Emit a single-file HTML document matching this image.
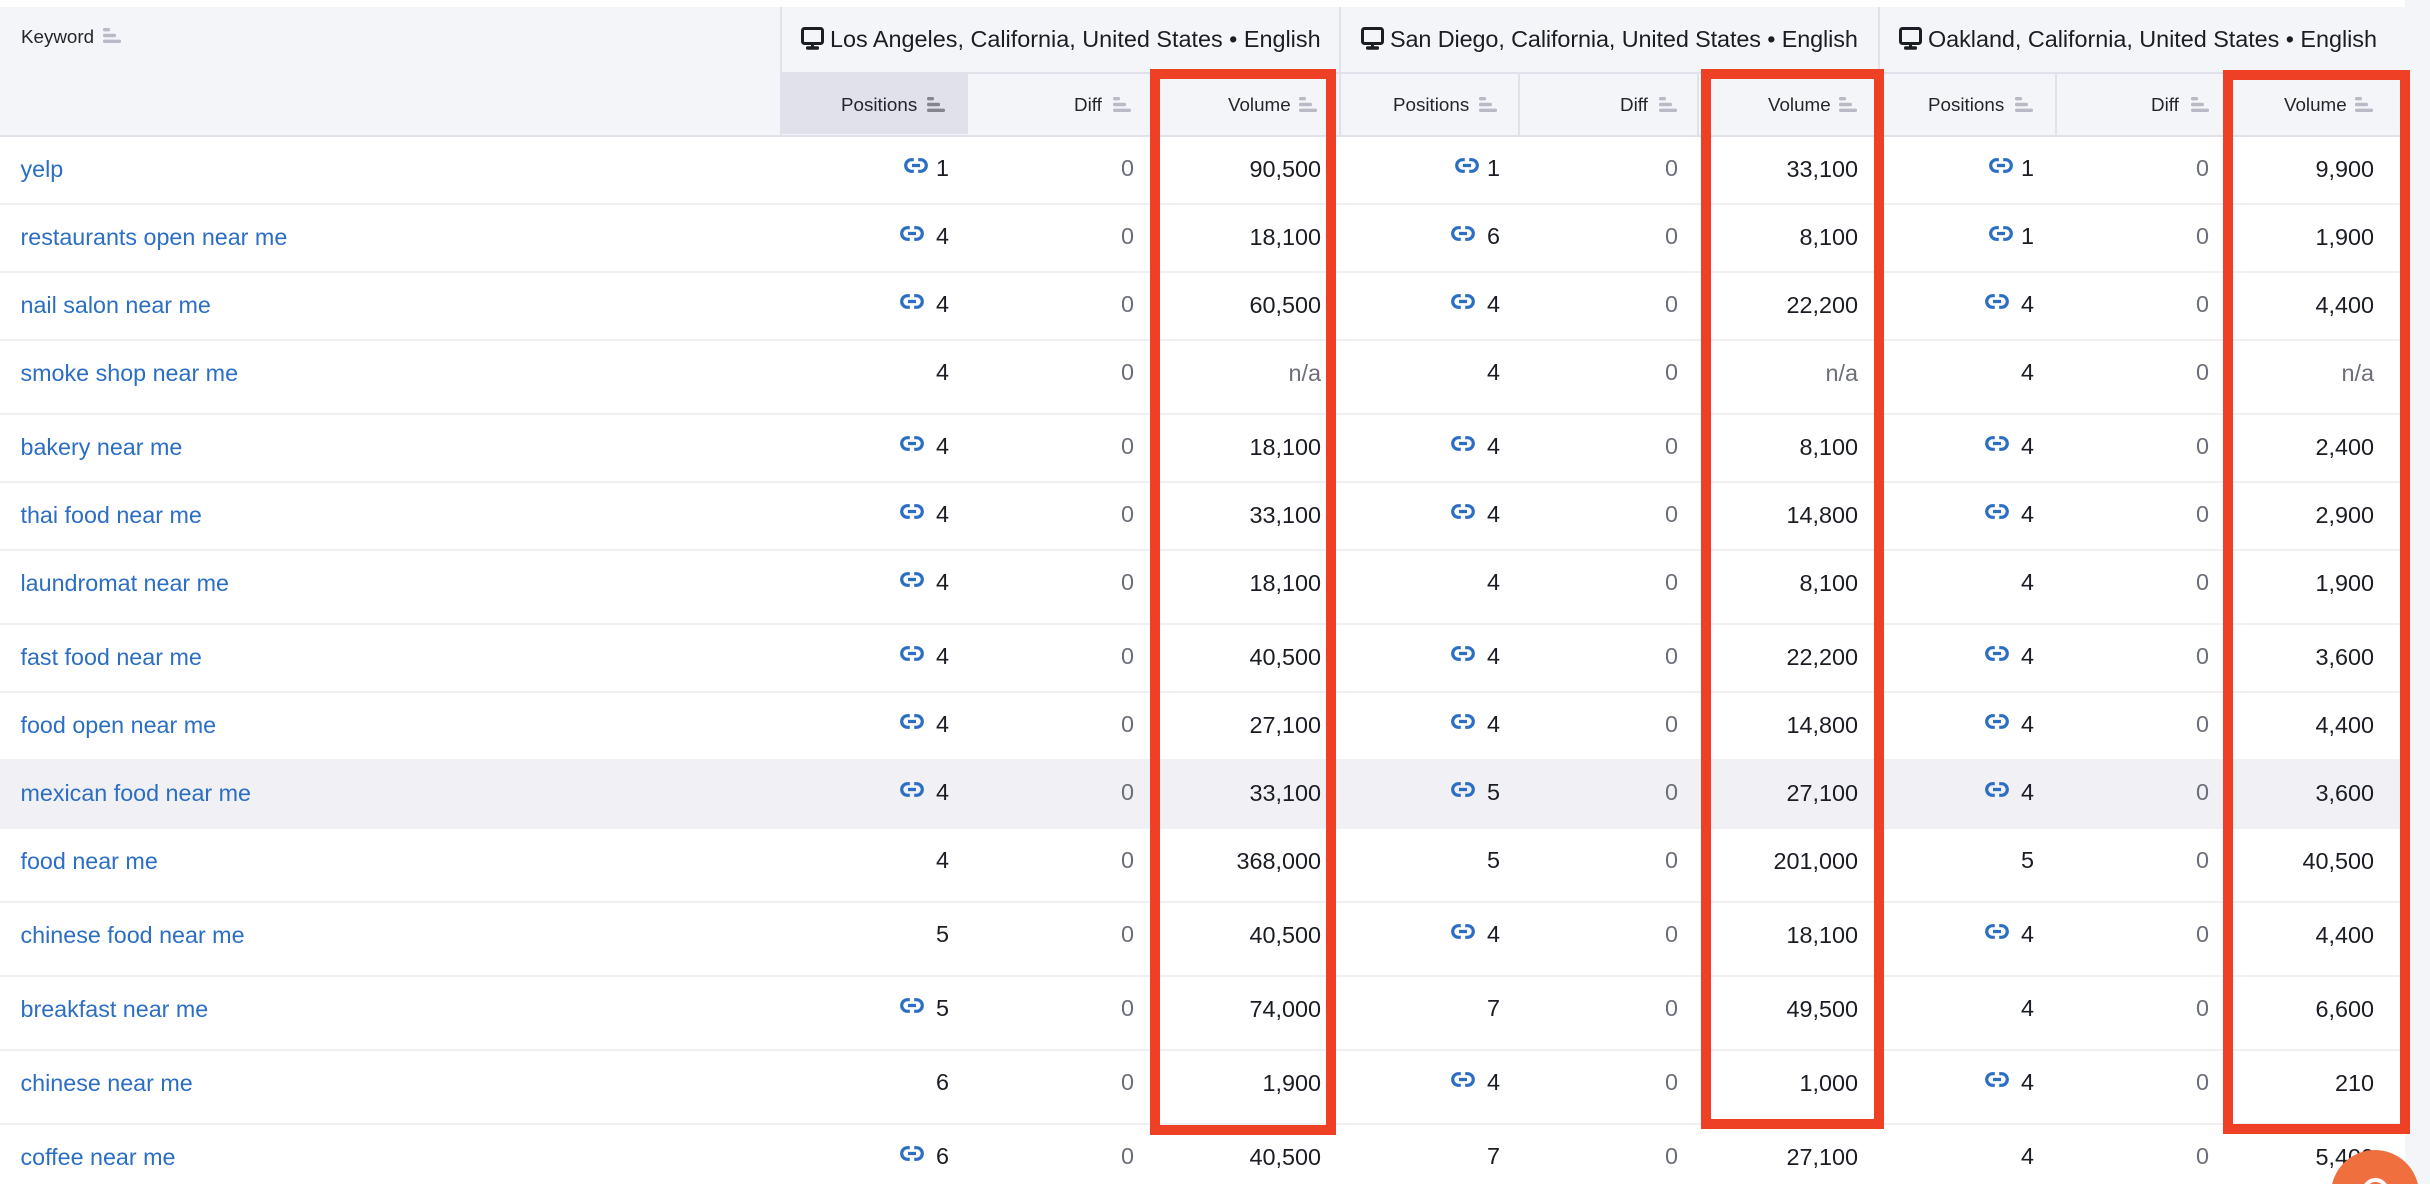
<!DOCTYPE html>
<html><head><meta charset="utf-8"><style>
html,body{margin:0;padding:0;background:#fff}
#p{position:relative;width:2430px;height:1184px;overflow:hidden;background:#fff;font-family:"Liberation Sans",sans-serif;color:#1b1d24}
#p div,#p span.c,#p span.h{position:absolute}
.strip{left:2405px;top:0;width:25px;height:1184px;background:#f4f5f9}
.hd{left:0;top:7px;width:2405px;height:128px;background:#f4f5f9}
.g{background:#e0e1e9}
.w{background:#fff}
.r{left:0;width:2405px;height:66px}
.ln{left:0;width:2405px;height:2px;background:#f0f0f4}
.k{left:20.5px;top:0;line-height:64px;font-size:23.3px;color:#2b6ec4;white-space:nowrap}
.c{top:0;display:flex;align-items:center;height:64px;font-size:23.4px;white-space:nowrap}
.z{color:#6c6e79}
.l{width:24px;height:15px;margin:-6px 12px 0 0;flex:none}
.one{margin-right:8px}
.p1{right:1456px;top:-1px}.d1{right:1271px;top:-1px}.v1{right:1084px}
.p2{right:905px;top:-1px}.d2{right:727px;top:-1px}.v2{right:547px}
.p3{right:371px;top:-1px}.d3{right:196px;top:-1px}.v3{right:31px}
.h{font-size:18.8px;line-height:24px;top:93px;white-space:nowrap;color:#24262d}
.s{position:absolute;width:18px;height:15px;top:97px}
.m{position:absolute;width:23px;height:23px;top:27px}
.t{font-size:23.4px;top:22px;line-height:34px;color:#1b1d24;white-space:nowrap}
.red{border:10px solid #ed4024;box-sizing:border-box}
</style></head><body><div id="p">
<svg width="0" height="0" style="position:absolute"><defs>
<symbol id="l" viewBox="0 0 24 15"><path d="M9.8 1.7H7.5a5.8 5.8 0 0 0 0 11.6h2.3M14.2 1.7h2.3a5.8 5.8 0 0 1 0 11.6h-2.3M8 7.5h8" fill="none" stroke="#2b6ec4" stroke-width="3.2" stroke-linecap="butt"/></symbol>
<symbol id="so" viewBox="0 0 18 15"><rect x="0" y="0" width="7" height="3.4" rx="1.5"/><rect x="0" y="5.8" width="13" height="3.4" rx="1.5"/><rect x="0" y="11.6" width="18" height="3.4" rx="1.5"/></symbol>
<symbol id="mo" viewBox="0 0 23 23"><path d="M3.5 1.5h16a2 2 0 0 1 2 2v11a2 2 0 0 1-2 2h-16a2 2 0 0 1-2-2v-11a2 2 0 0 1 2-2z" fill="none" stroke="#1b1d24" stroke-width="3"/><path d="M10 16.5h3v3h-3z" fill="#1b1d24"/><rect x="5" y="19.3" width="13" height="3.4" rx="1.5" fill="#1b1d24"/></symbol>
</defs></svg>

<div class="strip"></div>
<div class="hd"></div>
<div class="g" style="left:781px;top:74px;width:187px;height:60px"></div>
<div class="g" style="left:0;top:135px;width:2405px;height:2px"></div>
<div class="g" style="left:780px;top:7px;width:2px;height:128px"></div>
<div class="g" style="left:1339px;top:7px;width:2px;height:128px"></div>
<div class="g" style="left:1878px;top:7px;width:2px;height:128px"></div>
<div class="g" style="left:782px;top:72px;width:1623px;height:2px"></div>
<div class="g" style="left:1518px;top:74px;width:2px;height:61px"></div>
<div class="g" style="left:1697px;top:74px;width:2px;height:61px"></div>
<div class="g" style="left:2055px;top:74px;width:2px;height:61px"></div>

<span class="h" style="left:21px;top:25px">Keyword</span>
<svg class="s" style="left:103px;top:28px;fill:#b9bac5"><use href="#so"/></svg>

<svg class="m" style="left:801px"><use href="#mo"/></svg>
<span class="h t" style="left:830px">Los Angeles, California, United States • English</span>
<svg class="m" style="left:1361px"><use href="#mo"/></svg>
<span class="h t" style="left:1390px;letter-spacing:-0.1px">San Diego, California, United States • English</span>
<svg class="m" style="left:1899px"><use href="#mo"/></svg>
<span class="h t" style="left:1928px;letter-spacing:-0.03px">Oakland, California, United States • English</span>

<span class="h" style="left:841px">Positions</span><svg class="s" style="left:927px;fill:#84858f"><use href="#so"/></svg>
<span class="h" style="left:1074px">Diff</span><svg class="s" style="left:1113px;fill:#b9bac5"><use href="#so"/></svg>
<span class="h" style="left:1228px">Volume</span><svg class="s" style="left:1299px;fill:#b9bac5"><use href="#so"/></svg>
<span class="h" style="left:1393px">Positions</span><svg class="s" style="left:1479px;fill:#b9bac5"><use href="#so"/></svg>
<span class="h" style="left:1620px">Diff</span><svg class="s" style="left:1659px;fill:#b9bac5"><use href="#so"/></svg>
<span class="h" style="left:1768px">Volume</span><svg class="s" style="left:1839px;fill:#b9bac5"><use href="#so"/></svg>
<span class="h" style="left:1928px">Positions</span><svg class="s" style="left:2015px;fill:#b9bac5"><use href="#so"/></svg>
<span class="h" style="left:2151px">Diff</span><svg class="s" style="left:2191px;fill:#b9bac5"><use href="#so"/></svg>
<span class="h" style="left:2284px">Volume</span><svg class="s" style="left:2355px;fill:#b9bac5"><use href="#so"/></svg>

<div style="left:0;top:759px;width:2405px;height:68px;background:#f0f0f5"></div>
<div class="ln" style="top:203px"></div><div class="ln" style="top:271px"></div><div class="ln" style="top:339px"></div><div class="ln" style="top:413px"></div><div class="ln" style="top:481px"></div><div class="ln" style="top:549px"></div><div class="ln" style="top:623px"></div><div class="ln" style="top:691px"></div><div class="ln" style="top:827px"></div><div class="ln" style="top:901px"></div><div class="ln" style="top:975px"></div><div class="ln" style="top:1049px"></div><div class="ln" style="top:1123px"></div>

<div class="r" style="top:137px"><span class="k" style="position:absolute">yelp</span>
<span class="c p1"><svg class="l one"><use href="#l"/></svg>1</span><span class="c d1 z">0</span><span class="c v1">90,500</span>
<span class="c p2"><svg class="l one"><use href="#l"/></svg>1</span><span class="c d2 z">0</span><span class="c v2">33,100</span>
<span class="c p3"><svg class="l one"><use href="#l"/></svg>1</span><span class="c d3 z">0</span><span class="c v3">9,900</span></div>

<div class="r" style="top:205px"><span class="k" style="position:absolute">restaurants open near me</span>
<span class="c p1"><svg class="l"><use href="#l"/></svg>4</span><span class="c d1 z">0</span><span class="c v1">18,100</span>
<span class="c p2"><svg class="l"><use href="#l"/></svg>6</span><span class="c d2 z">0</span><span class="c v2">8,100</span>
<span class="c p3"><svg class="l one"><use href="#l"/></svg>1</span><span class="c d3 z">0</span><span class="c v3">1,900</span></div>

<div class="r" style="top:273px"><span class="k" style="position:absolute">nail salon near me</span>
<span class="c p1"><svg class="l"><use href="#l"/></svg>4</span><span class="c d1 z">0</span><span class="c v1">60,500</span>
<span class="c p2"><svg class="l"><use href="#l"/></svg>4</span><span class="c d2 z">0</span><span class="c v2">22,200</span>
<span class="c p3"><svg class="l"><use href="#l"/></svg>4</span><span class="c d3 z">0</span><span class="c v3">4,400</span></div>

<div class="r" style="top:341px"><span class="k" style="position:absolute">smoke shop near me</span>
<span class="c p1">4</span><span class="c d1 z">0</span><span class="c v1 z">n/a</span>
<span class="c p2">4</span><span class="c d2 z">0</span><span class="c v2 z">n/a</span>
<span class="c p3">4</span><span class="c d3 z">0</span><span class="c v3 z">n/a</span></div>

<div class="r" style="top:415px"><span class="k" style="position:absolute">bakery near me</span>
<span class="c p1"><svg class="l"><use href="#l"/></svg>4</span><span class="c d1 z">0</span><span class="c v1">18,100</span>
<span class="c p2"><svg class="l"><use href="#l"/></svg>4</span><span class="c d2 z">0</span><span class="c v2">8,100</span>
<span class="c p3"><svg class="l"><use href="#l"/></svg>4</span><span class="c d3 z">0</span><span class="c v3">2,400</span></div>

<div class="r" style="top:483px"><span class="k" style="position:absolute">thai food near me</span>
<span class="c p1"><svg class="l"><use href="#l"/></svg>4</span><span class="c d1 z">0</span><span class="c v1">33,100</span>
<span class="c p2"><svg class="l"><use href="#l"/></svg>4</span><span class="c d2 z">0</span><span class="c v2">14,800</span>
<span class="c p3"><svg class="l"><use href="#l"/></svg>4</span><span class="c d3 z">0</span><span class="c v3">2,900</span></div>

<div class="r" style="top:551px"><span class="k" style="position:absolute">laundromat near me</span>
<span class="c p1"><svg class="l"><use href="#l"/></svg>4</span><span class="c d1 z">0</span><span class="c v1">18,100</span>
<span class="c p2">4</span><span class="c d2 z">0</span><span class="c v2">8,100</span>
<span class="c p3">4</span><span class="c d3 z">0</span><span class="c v3">1,900</span></div>

<div class="r" style="top:625px"><span class="k" style="position:absolute">fast food near me</span>
<span class="c p1"><svg class="l"><use href="#l"/></svg>4</span><span class="c d1 z">0</span><span class="c v1">40,500</span>
<span class="c p2"><svg class="l"><use href="#l"/></svg>4</span><span class="c d2 z">0</span><span class="c v2">22,200</span>
<span class="c p3"><svg class="l"><use href="#l"/></svg>4</span><span class="c d3 z">0</span><span class="c v3">3,600</span></div>

<div class="r" style="top:693px"><span class="k" style="position:absolute">food open near me</span>
<span class="c p1"><svg class="l"><use href="#l"/></svg>4</span><span class="c d1 z">0</span><span class="c v1">27,100</span>
<span class="c p2"><svg class="l"><use href="#l"/></svg>4</span><span class="c d2 z">0</span><span class="c v2">14,800</span>
<span class="c p3"><svg class="l"><use href="#l"/></svg>4</span><span class="c d3 z">0</span><span class="c v3">4,400</span></div>

<div class="r" style="top:761px"><span class="k" style="position:absolute">mexican food near me</span>
<span class="c p1"><svg class="l"><use href="#l"/></svg>4</span><span class="c d1 z">0</span><span class="c v1">33,100</span>
<span class="c p2"><svg class="l"><use href="#l"/></svg>5</span><span class="c d2 z">0</span><span class="c v2">27,100</span>
<span class="c p3"><svg class="l"><use href="#l"/></svg>4</span><span class="c d3 z">0</span><span class="c v3">3,600</span></div>

<div class="r" style="top:829px"><span class="k" style="position:absolute">food near me</span>
<span class="c p1">4</span><span class="c d1 z">0</span><span class="c v1">368,000</span>
<span class="c p2">5</span><span class="c d2 z">0</span><span class="c v2">201,000</span>
<span class="c p3">5</span><span class="c d3 z">0</span><span class="c v3">40,500</span></div>

<div class="r" style="top:903px"><span class="k" style="position:absolute">chinese food near me</span>
<span class="c p1">5</span><span class="c d1 z">0</span><span class="c v1">40,500</span>
<span class="c p2"><svg class="l"><use href="#l"/></svg>4</span><span class="c d2 z">0</span><span class="c v2">18,100</span>
<span class="c p3"><svg class="l"><use href="#l"/></svg>4</span><span class="c d3 z">0</span><span class="c v3">4,400</span></div>

<div class="r" style="top:977px"><span class="k" style="position:absolute">breakfast near me</span>
<span class="c p1"><svg class="l"><use href="#l"/></svg>5</span><span class="c d1 z">0</span><span class="c v1">74,000</span>
<span class="c p2">7</span><span class="c d2 z">0</span><span class="c v2">49,500</span>
<span class="c p3">4</span><span class="c d3 z">0</span><span class="c v3">6,600</span></div>

<div class="r" style="top:1051px"><span class="k" style="position:absolute">chinese near me</span>
<span class="c p1">6</span><span class="c d1 z">0</span><span class="c v1">1,900</span>
<span class="c p2"><svg class="l"><use href="#l"/></svg>4</span><span class="c d2 z">0</span><span class="c v2">1,000</span>
<span class="c p3"><svg class="l"><use href="#l"/></svg>4</span><span class="c d3 z">0</span><span class="c v3">210</span></div>

<div class="r" style="top:1125px"><span class="k" style="position:absolute">coffee near me</span>
<span class="c p1"><svg class="l"><use href="#l"/></svg>6</span><span class="c d1 z">0</span><span class="c v1">40,500</span>
<span class="c p2">7</span><span class="c d2 z">0</span><span class="c v2">27,100</span>
<span class="c p3">4</span><span class="c d3 z">0</span><span class="c v3">5,400</span></div>

<div class="red" style="left:1150px;top:69px;width:186px;height:1066px"></div>
<div class="red" style="left:1701px;top:69px;width:183px;height:1060px"></div>
<div class="red" style="left:2223px;top:70px;width:187px;height:1064px"></div>

<div style="left:2331px;top:1150px;width:88px;height:88px;border-radius:50%;background:#ef6f3f"></div>
<div style="left:2362px;top:1178px;width:27px;height:27px;border-radius:50%;border:4px solid #fff;box-sizing:border-box"></div>
</div></body></html>
